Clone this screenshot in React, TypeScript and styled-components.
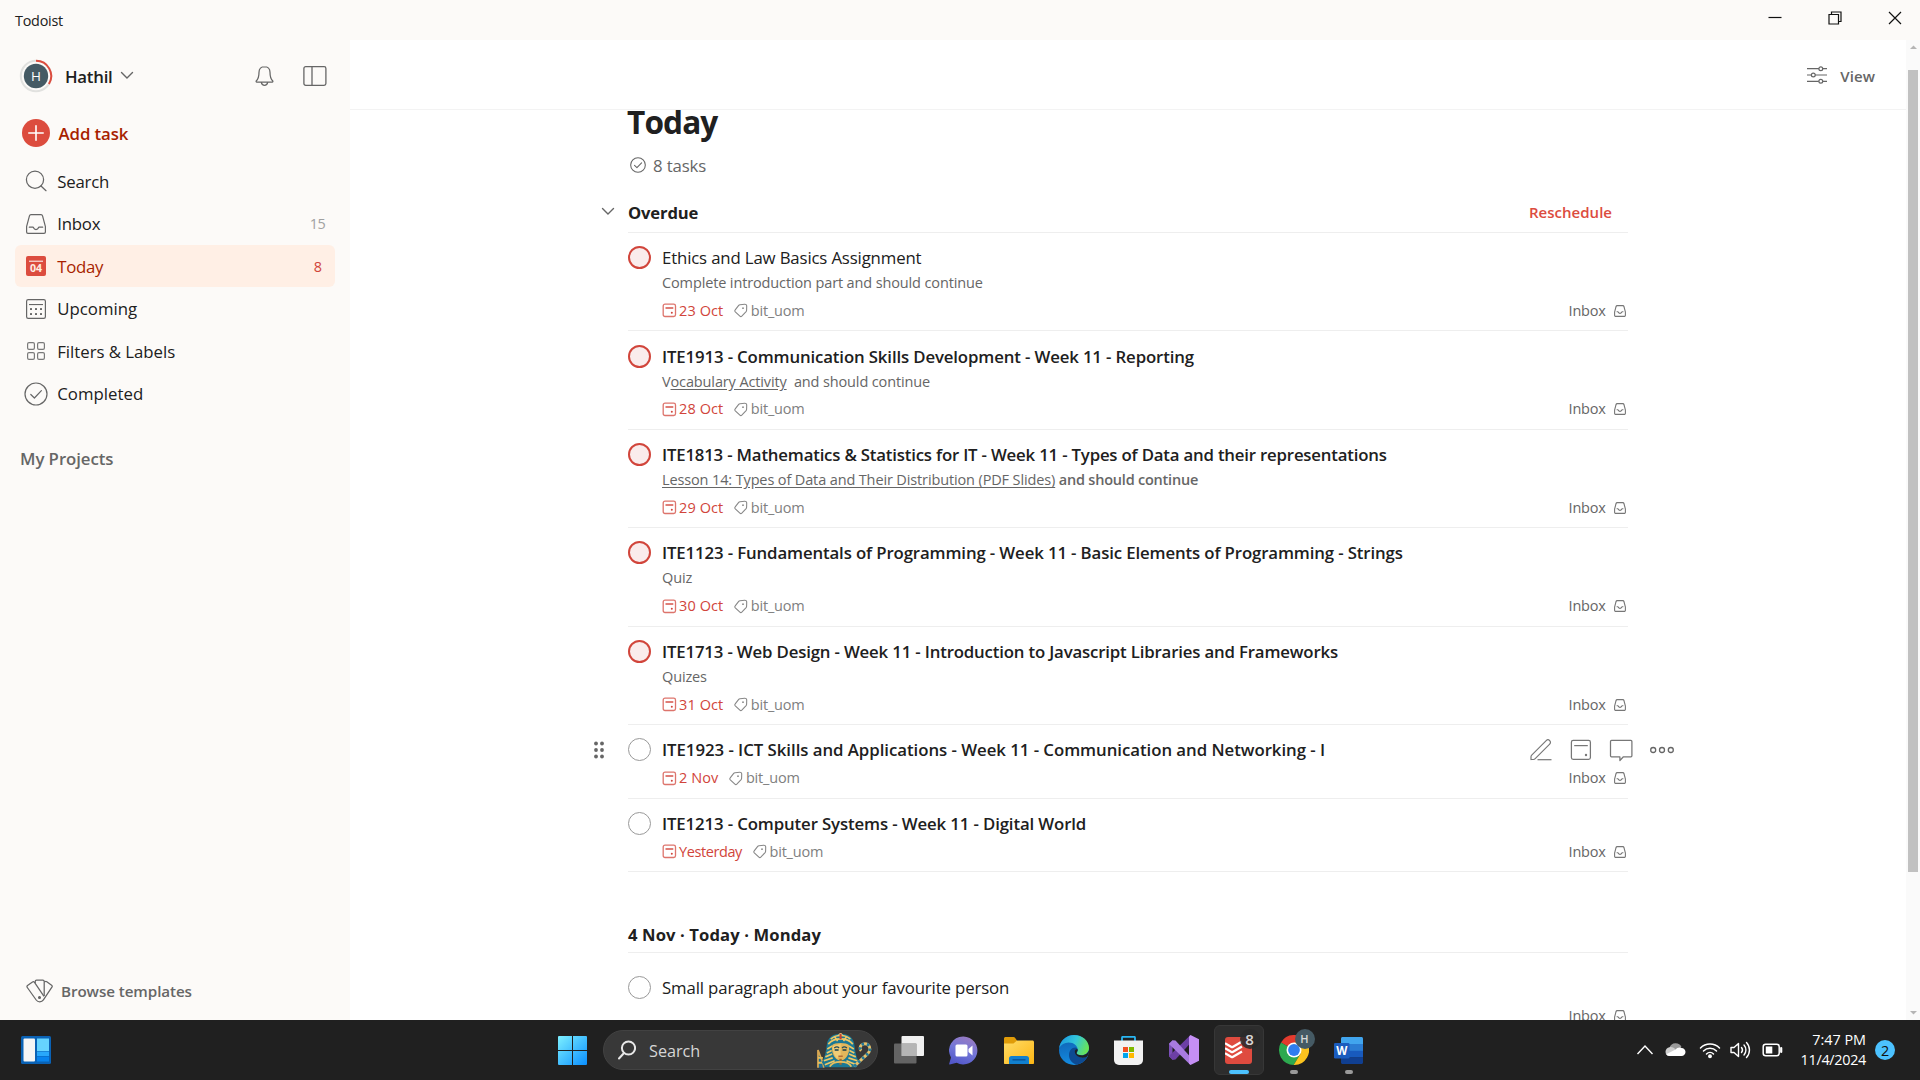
import React from 'react';
import styled, { createGlobalStyle } from 'styled-components';

const GlobalStyle = createGlobalStyle`
  * { box-sizing: border-box; }
  html, body { margin: 0; padding: 0; overflow: hidden; }
  body {
    font-family: "Open Sans", "Noto Sans", sans-serif;
    color: #202020;
    background: #fff;
  }
  svg { display: block; flex: none; }
`;

/* ---------- frame ---------- */

const Screen = styled.div`
  width: 1920px;
  height: 1080px;
  display: flex;
  flex-direction: column;
  overflow: hidden;
`;

const TitleBar = styled.header`
  height: 40px;
  flex: none;
  display: flex;
  justify-content: space-between;
  padding-left: 15px;
  background: #fcfaf8;
`;

const AppName = styled.span`
  font-size: 14.4px;
  line-height: 41px;
  letter-spacing: -0.24px;
`;

const WindowControls = styled.div`
  display: flex;
  margin-right: -5px;
`;

const WindowButton = styled.div`
  width: 60px;
  height: 36px;
  display: grid;
  place-items: center;
`;

const Body = styled.div`
  flex: 1;
  min-height: 0;
  display: flex;
`;

/* ---------- sidebar ---------- */

const Sidebar = styled.aside`
  width: 350px;
  flex: none;
  display: flex;
  flex-direction: column;
  padding: 13px 15px 0;
  background: #fcfaf8;
`;

const Profile = styled.div`
  height: 45px;
  display: flex;
  align-items: center;
  padding: 0 8px 0 4px;
`;

const UserName = styled.span`
  margin: 1px 7px 0 12px;
  font-size: 16.8px;
  font-weight: 600;
  letter-spacing: -0.25px;
`;

const ProfileActions = styled.div`
  display: flex;
  align-items: center;
  gap: 29.5px;
  margin-left: auto;
`;

const AddTask = styled.div`
  height: 44px;
  margin: 13px 0 5px;
  padding-left: 7px;
  display: flex;
  align-items: center;
  gap: 8.5px;
  font-size: 16.8px;
  font-weight: 600;
  letter-spacing: -0.08px;
  color: #a81f00;
`;

const NavRow = styled.div<{ $active?: boolean }>`
  height: 42px;
  flex: none;
  margin-bottom: 0.5px;
  display: flex;
  align-items: center;
  padding: 0 9px;
  border-radius: 6px;
  background: ${p => (p.$active ? '#ffefe5' : 'transparent')};
  color: ${p => (p.$active ? '#a81f00' : '#202020')};
`;

const NavIcon = styled.div`
  width: 24px;
  display: grid;
  place-items: center;
`;

const NavLabel = styled.span<{ $tracking: number }>`
  flex: 1;
  margin-left: 9.2px;
  font-size: 16.8px;
  letter-spacing: ${p => p.$tracking}px;
`;

const NavCount = styled.span<{ $active?: boolean }>`
  width: 17px;
  text-align: center;
  font-size: 14.4px;
  letter-spacing: -0.6px;
  color: ${p => (p.$active ? '#d1453b' : '#a0a0a0')};
`;

const ProjectsHeading = styled.div`
  margin: 32px 0 0 5px;
  font-size: 16.8px;
  line-height: 24px;
  font-weight: 600;
  letter-spacing: -0.06px;
  color: #666;
`;

const Templates = styled.div`
  height: 40px;
  margin: auto 0 9px;
  padding-left: 10.5px;
  display: flex;
  align-items: center;
  gap: 8.5px;
  font-size: 15.2px;
  font-weight: 600;
  letter-spacing: -0.08px;
  color: #666;
`;

/* ---------- main ---------- */

const Main = styled.main`
  flex: 1;
  min-width: 0;
  display: flex;
  flex-direction: column;
`;

const ViewHeader = styled.div`
  height: 70px;
  flex: none;
  display: flex;
  justify-content: flex-end;
  align-items: center;
  gap: 13px;
  padding-right: 31px;
  border-bottom: 1px solid #f3f3f3;
`;

const ViewLabel = styled.span`
  margin-top: 3px;
  font-size: 15px;
  font-weight: 600;
  letter-spacing: 0.1px;
  color: #666;
`;

const Content = styled.div`
  flex: 1;
  min-height: 0;
  overflow: hidden;
`;

const List = styled.div`
  width: 1000px;
  margin-left: 278px;
`;

const PageTitle = styled.h1`
  margin: -4px 0 0 -1px;
  font-size: 31.6px;
  line-height: 32px;
  font-weight: 700;
  letter-spacing: -0.9px;
`;

const TaskCount = styled.div`
  height: 24px;
  margin-top: 15px;
  padding-left: 2px;
  display: flex;
  align-items: center;
  gap: 7px;
  font-size: 16.8px;
  letter-spacing: -0.15px;
  color: #666;
`;

const SectionHeader = styled.div<{ $gap: number; $height: number }>`
  position: relative;
  height: ${p => p.$height}px;
  margin-top: ${p => p.$gap}px;
  display: flex;
  justify-content: space-between;
  border-bottom: 1px solid #eee;
`;

const SectionTitle = styled.h2<{ $tracking: number }>`
  margin: 1px 0 0;
  font-size: 16.6px;
  line-height: 24px;
  font-weight: 700;
  letter-spacing: ${p => p.$tracking}px;
`;

const Collapse = styled.div`
  position: absolute;
  left: -27px;
  top: 6.5px;
`;

const Reschedule = styled.span`
  margin-right: 16px;
  font-size: 15px;
  line-height: 24px;
  font-weight: 600;
  color: #dc4c3e;
  letter-spacing: 0.02px;
`;

const TaskRow = styled.article<{ $height: number }>`
  position: relative;
  height: ${p => p.$height}px;
  display: flex;
  padding-top: 12.2px;
  border-bottom: 1px solid #eee;
`;

const Checkbox = styled.div<{ $priority?: boolean }>`
  width: 23px;
  height: 23px;
  flex: none;
  margin: 1px 11px 0 0;
  border-radius: 50%;
  border: ${p => (p.$priority ? '2px solid #d1453b' : '1px solid #999')};
  background: ${p => (p.$priority ? '#faecec' : '#fff')};
`;

const TaskBody = styled.div`
  flex: 1;
  min-width: 0;
  white-space: pre;
`;

const TaskTitle = styled.div<{ $bold?: boolean; $tracking: number }>`
  font-size: 16.8px;
  line-height: 25px;
  font-weight: ${p => (p.$bold ? 600 : 400)};
  letter-spacing: ${p => p.$tracking}px;
`;

const Description = styled.div`
  margin-top: 3px;
  padding-bottom: 1.8px;
  font-size: 14.5px;
  line-height: 20px;
  letter-spacing: -0.13px;
  color: #666;
`;

const DocLink = styled.span`
  text-decoration: underline;
  text-underline-offset: 2px;
`;

const Strong = styled.strong`
  font-weight: 600;
  letter-spacing: -0.22px;
`;

const Meta = styled.div`
  height: 20px;
  margin-top: 6px;
  display: flex;
  align-items: center;
  font-size: 14.5px;
  line-height: 20px;
`;

const DueDate = styled.div<{ $tracking: number }>`
  display: flex;
  align-items: center;
  gap: 2px;
  margin-right: 11px;
  letter-spacing: ${p => p.$tracking}px;
  color: #d1453b;
`;

const Tag = styled.div`
  display: flex;
  align-items: center;
  gap: 2.5px;
  letter-spacing: -0.2px;
  color: #808080;
`;

const Project = styled.div`
  margin-left: auto;
  display: flex;
  align-items: center;
  gap: 8.5px;
  padding-right: 2px;
  letter-spacing: -0.25px;
  color: #666;
`;

const DragHandle = styled.div`
  position: absolute;
  left: -35px;
  top: 16px;
`;

const RowActions = styled.div`
  position: absolute;
  right: -47px;
  top: 13px;
  display: flex;
  gap: 16px;
`;

const ScrollTrack = styled.div`
  width: 14px;
  flex: none;
  display: flex;
  flex-direction: column;
  align-items: center;
  padding: 5px 0;
  background: #fafafa;
`;

const ScrollThumb = styled.div`
  width: 10px;
  height: 802px;
  margin: 21px 0 auto;
  background: #c1c1c1;
`;

/* ---------- taskbar ---------- */

const Taskbar = styled.footer`
  height: 60px;
  flex: none;
  display: flex;
  align-items: center;
  padding: 0 25px 0 21px;
  background: #202020;
  color: #fff;
`;

const StartArea = styled.div`
  display: flex;
  align-items: center;
  margin-left: 507px;
  gap: 16px;
`;

const SearchPill = styled.div`
  width: 275px;
  height: 40px;
  display: flex;
  align-items: center;
  padding: 0 5px 0 14px;
  border-radius: 20px;
  border: 1px solid #424242;
  background: #383838;
  font-size: 16.2px;
  color: #d6d6d6;
`;

const SearchPrompt = styled.span`
  flex: 1;
  margin: 1px 0 0 13px;
`;

const AppStrip = styled.div`
  display: flex;
  margin-left: 3px;
`;

const AppCell = styled.div`
  width: 55px;
  height: 60px;
  padding: 5px 2.5px;
`;

const AppTile = styled.div<{ $active?: boolean }>`
  position: relative;
  height: 50px;
  display: grid;
  place-items: center;
  border-radius: 6px;
  border: 1px solid ${p => (p.$active ? '#373737' : 'transparent')};
  background: ${p => (p.$active ? '#2d2d2d' : 'transparent')};
`;

const RunMark = styled.i<{ $active?: boolean }>`
  position: absolute;
  bottom: 0;
  left: 50%;
  width: ${p => (p.$active ? 20 : 8)}px;
  height: 4px;
  transform: translateX(-50%);
  border-radius: 2px;
  background: ${p => (p.$active ? '#4cc2ff' : '#9a9a9a')};
`;

const TileBadge = styled.b<{ $tone: string; $size: number; $weight: number }>`
  position: absolute;
  right: 3px;
  top: 3px;
  width: 20px;
  height: 20px;
  border-radius: 50%;
  background: ${p => p.$tone};
  font-size: ${p => p.$size}px;
  line-height: 20px;
  font-weight: ${p => p.$weight};
  text-align: center;
  color: #d8d8d8;
`;

const Tray = styled.div`
  margin-left: auto;
  display: flex;
  align-items: center;
`;

const TrayIcons = styled.div`
  display: flex;
  align-items: center;
  gap: 11px;
`;

const WifiIcon = styled.svg`
  margin: 0 -2px 0 2px;
`;

const Clock = styled.div`
  width: 83px;
  margin-right: 9px;
  text-align: right;
  font-size: 14.4px;
  line-height: 20px;
`;

const ClockDate = styled.div`
  letter-spacing: -0.3px;
`;

const Notice = styled.div`
  width: 20px;
  height: 20px;
  border-radius: 50%;
  background: #4cc2ff;
  color: #111;
  font-size: 14.4px;
  line-height: 21px;
  text-align: center;
`;

/* ---------- icons ---------- */

const ink = '#666';

const Chevron = () => (
  <svg width="14" height="9" viewBox="0 0 14 9" fill="none" stroke={ink} strokeWidth="1.4">
    <path d="M1.500 1.500 7 7l5.500-5.500" strokeLinecap="round" />
  </svg>
);

const InboxIcon = () => (
  <svg width="20" height="20" viewBox="0 0 20 20" fill="none" stroke={ink} strokeWidth="1.2">
    <path d="M5 .6h10a1.6 1.6 0 0 1 1.55 1.2L19.4 12.5V18a1.4 1.4 0 0 1-1.4 1.4H2A1.4 1.4 0 0 1 .6 18v-5.500L3.450 1.800A1.600 1.600 0 0 1 5 .6Z" />
    <path d="M3.300 13.200h3.500a.8.8 0 0 1 .75.6 2.600 2.600 0 0 0 4.900 0 .8.8 0 0 1 .75-.6h3.500" strokeLinecap="round" />
  </svg>
);

const MiniInbox = () => (
  <svg width="12" height="12" viewBox="0 0 12 12" fill="none" stroke="#777" strokeWidth="1.1">
    <path d="M3.200.6h5.600a1.200 1.200 0 0 1 1.150.9l1.450 5.500v3.200a1.200 1.200 0 0 1-1.200 1.200H1.800A1.200 1.200 0 0 1 .6 10.200V7l1.450-5.500A1.200 1.200 0 0 1 3.200.6Z" />
    <path d="M2.600 6.700h1.200c.4 0 .5.300.600.600a1.700 1.700 0 0 0 3.200 0c.1-.3.200-.6.600-.6h1.200" />
  </svg>
);

const DateIcon = () => (
  <svg width="15" height="15" viewBox="0 0 15 15" fill="none" stroke="#d1453b">
    <rect x="1.200" y="1.200" width="12.300" height="12.300" rx="1.800" strokeOpacity=".75" strokeWidth="1.300" />
    <path d="M3.500 5h7.800" strokeWidth="1.400" />
    <circle cx="9.800" cy="9.800" r="1" fill="#d1453b" stroke="none" />
  </svg>
);

const TagIcon = () => (
  <svg width="14" height="15" viewBox="0 0 14 15" fill="none" stroke="#888" strokeWidth="1.100">
    <path d="M6 1.700 10.700 1.200c1.100-.1 2 .6 2 1.700l-.1 4.400c0 .5-.2.9-.5 1.300l-4.300 4.600c-.6.600-1.300.600-1.900 0L1.300 8.800c-.6-.6-.6-1.300-.1-1.900l3.500-4.500c.3-.4.700-.6 1.300-.7Z" />
    <circle cx="9" cy="5.200" r=".9" fill="#888" stroke="none" />
  </svg>
);

const CheckCircle = ({ size, width }: { size: number; width: number }) => (
  <svg width={size} height={size} viewBox="0 0 24 24" fill="none" stroke={ink} strokeWidth={width}>
    <circle cx="12" cy="12" r="11" />
    <path d="m6.800 12.500 3.600 3.500 7-7.300" strokeLinecap="round" strokeLinejoin="round" />
  </svg>
);

const Avatar = () => (
  <svg width="34" height="34" viewBox="0 0 34 34">
    <circle cx="17" cy="17" r="15.200" fill="none" stroke="#e1e1df" strokeWidth="2" />
    <path d="M17 1.800a15.200 15.200 0 0 1 12.900 23.200" fill="none" stroke="#dc4c3e" strokeWidth="2" />
    <circle cx="17" cy="17" r="12.200" fill="#455a64" />
    <text x="17" y="22" textAnchor="middle" fontSize="13.500" fill="#fff">H</text>
  </svg>
);

const Bell = () => (
  <svg width="19" height="22" viewBox="0 0 19 22" fill="none" stroke={ink} strokeWidth="1.250">
    <path d="M9.500 1.600c-3.300 0-5.500 2.400-5.500 5.600 0 4.800-.9 6.800-2.600 8.500-.6.600-.3 1.300.4 1.300h15.400c.7 0 1-.7.4-1.300C15.900 14 15 12 15 7.200c0-3.200-2.200-5.600-5.500-5.600Z" />
    <path d="M6.300 17.200c.3 2 1.500 3.200 3.200 3.200s2.900-1.200 3.200-3.200" />
  </svg>
);

const PanelIcon = () => (
  <svg width="24" height="20" viewBox="0 0 24 20" fill="none" stroke={ink} strokeWidth="1.300">
    <rect x=".9" y=".7" width="22" height="18.600" rx="1.800" />
    <path d="M9 .7v18.600" />
  </svg>
);

const PlusDisc = () => (
  <svg width="28" height="28" viewBox="0 0 28 28">
    <circle cx="14" cy="14" r="14" fill="#dc4c3e" />
    <path d="M14 6.800v14.400M6.800 14h14.400" stroke="#fff" strokeWidth="1.600" strokeLinecap="round" />
  </svg>
);

const SearchIcon = () => (
  <svg width="22" height="22" viewBox="0 0 22 22" fill="none" stroke={ink} strokeWidth="1.250">
    <circle cx="10" cy="9.700" r="8.600" />
    <path d="m16 16 5 4.700" strokeLinecap="round" />
  </svg>
);

const TodayIcon = () => (
  <svg width="20" height="20" viewBox="0 0 20 20">
    <rect width="20" height="20" rx="2" fill="#dc4c3e" />
    <path d="M3 5.200h14" stroke="#fff" strokeWidth="1" />
    <text x="10" y="16" textAnchor="middle" fontSize="10.500" fontWeight="700" fill="#ffefe5">04</text>
  </svg>
);

const UpcomingIcon = () => (
  <svg width="20" height="20" viewBox="0 0 20 20" fill={ink}>
    <rect x=".6" y=".6" width="18.800" height="18.800" rx="1.600" fill="none" stroke={ink} strokeWidth="1.200" />
    <path d="M3 5h14v1.100H3z" />
    {[10, 15].map(y => [5, 10, 15].map(x => <rect key={`${x}-${y}`} x={x - 1} y={y - 1} width="2" height="2" rx=".5" />))}
  </svg>
);

const FiltersIcon = () => (
  <svg width="20" height="20" viewBox="0 0 20 20" fill="none" stroke="#7a7a7a" strokeWidth="1.200">
    {[1.600, 11.600].map(y => [1.600, 11.600].map(x => <rect key={`${x}-${y}`} x={x} y={y} width="6.800" height="6.800" rx="1.400" />))}
  </svg>
);

const TemplatesIcon = () => (
  <svg width="27" height="24" viewBox="0 0 27 24" fill="none" stroke={ink} strokeWidth="1.250" strokeLinejoin="round">
    <path d="M10.200 21 1.300 8.500c-.5-.7-.3-1.500.2-2l5-3.500c.7-.5 1.500-.3 2 .3l9.500 14" />
    <path d="M9.200 4V2.500C9.200 1.700 9.700 1 10.600 1h6.200c.9 0 1.400.7 1.400 1.500v14.500" />
    <path d="m18.300 2.900 1.300-.4c.4-.1.800 0 1.200.2l4.800 3.500c.7.500.8 1.200.3 2l-8.500 12.700c-1.700 2.500-5.500 2.500-7.200.1" />
    <circle cx="13.500" cy="18.500" r=".9" fill={ink} />
  </svg>
);

const SlidersIcon = () => (
  <svg width="20" height="18" viewBox="0 0 20 18" fill="#fff" stroke={ink} strokeWidth="1.200">
    <path d="M0 2.700h20M0 9h20M0 15.300h20" />
    <circle cx="13.800" cy="2.700" r="1.900" />
    <circle cx="6.300" cy="9" r="1.900" />
    <circle cx="13.800" cy="15.300" r="1.900" />
  </svg>
);

const Grip = () => (
  <svg width="12" height="18" viewBox="0 0 12 18" fill={ink}>
    {[2.500, 9, 15.500].map(y => [3, 9].map(x => <circle key={`${x}-${y}`} cx={x} cy={y} r="1.900" />))}
  </svg>
);

const PencilAction = () => (
  <svg width="24" height="24" viewBox="0 0 24 24" fill="none" stroke="#777" strokeWidth="1.200">
    <path d="M2 21.600v-2.800c0-.7.200-1.200.7-1.700L17.200 2.600c1-1 2.500-1 3.500 0s1 2.500 0 3.500L6.200 20.700c-.5.500-1 .8-1.700.8H2Z" strokeLinejoin="round" />
    <path d="M8.500 21.700h14" />
  </svg>
);

const DateAction = () => (
  <svg width="24" height="24" viewBox="0 0 24 24" fill="none" stroke="#777" strokeWidth="1.250">
    <rect x="2.400" y="2.400" width="19" height="19" rx="1.800" />
    <path d="M5.200 7.600h13.600" />
    <circle cx="17" cy="17" r="1.200" fill="#777" stroke="none" />
  </svg>
);

const CommentAction = () => (
  <svg width="24" height="24" viewBox="0 0 24 24" fill="none" stroke="#777" strokeWidth="1.250" strokeLinejoin="round">
    <path d="M2.500 2.400h19.400c.6 0 1 .4 1 1v14.400c0 .6-.4 1-1 1h-7.500l-3.500 3.700v-3.700H2.500c-.6 0-1-.4-1-1V3.400c0-.6.4-1 1-1Z" />
  </svg>
);

const MoreAction = () => (
  <svg width="26" height="24" viewBox="0 0 26 24" fill="none" stroke={ink} strokeWidth="1.300">
    {[4.200, 13, 21.800].map(x => <circle key={x} cx={x} cy="12" r="2.500" />)}
  </svg>
);

/* ---------- taskbar drawings ---------- */

const WidgetsIcon = () => (
  <svg width="30" height="28" viewBox="0 0 30 28">
    <rect width="30" height="28" rx="1.500" fill="#0a62b5" />
    <rect x="2.500" y="2.500" width="11.500" height="23" rx="1" fill="#f5f5f5" />
    <rect x="16" y="2.500" width="12" height="12.500" fill="#66d4ff" />
    <rect x="16" y="15.500" width="12" height="4.500" fill="#28a8fb" />
    <rect x="16" y="20.500" width="12" height="5" fill="#0783ee" />
  </svg>
);

const WindowsIcon = () => (
  <svg width="29" height="29" viewBox="0 0 29 29">
    <defs>
      <linearGradient id="win" x1="0" y1="0" x2="1" y2="1"><stop stopColor="#7df0ff" /><stop offset="1" stopColor="#0a8fff" /></linearGradient>
    </defs>
    <path fill="url(#win)" d="M1 0h13v14H0V1a1 1 0 0 1 1-1Zm14 0h13a1 1 0 0 1 1 1v13H15ZM0 15h14v14H1a1 1 0 0 1-1-1Zm15 0h14v13a1 1 0 0 1-1 1H15Z" />
  </svg>
);

const PillSearchIcon = () => (
  <svg width="18" height="20" viewBox="0 0 18 20" fill="none" stroke="#e8e8e8" strokeWidth="2">
    <circle cx="10.500" cy="8" r="6.600" />
    <path d="m6 13-5 5.500" strokeLinecap="round" />
  </svg>
);

const PharaohIcon = () => (
  <svg width="55" height="36" viewBox="0 0 56 36">
    <path d="M1 36V18l5 13 1 5" fill="#1d6f97" stroke="#d9a852" strokeWidth="1.800" />
    <path d="M1 26h5M1 31h6" stroke="#e8c060" strokeWidth="2" />
    <path d="M24 1.500c8 0 13 4 14 11 1 8 2 13 5 18l-3 5H8l-3-5c3-5 4-10 5-18 1-7 6-11 14-11Z" fill="#1b7895" />
    <g stroke="#efc765" strokeWidth="1.700" fill="none">
      <path d="M14 7c5-5 15-5 20 0M11.500 12c6-7 19-7 25 0M10.500 17l5-3M10 21l5-2.500M8.500 25l7-3M7 29l9-3M37.500 17l-5-3M38 21l-5-2.500M39.500 25l-7-3M41 29l-9-3M8 33l10-4M40 33l-10-4" />
      <path d="M18 4.500 21 9M30 4.500 27 9" />
    </g>
    <path d="M15.500 13c2-3 15-3 17 0 .8 5-.2 10-3.500 13.500-3 3-7 3-10 0-3.300-3.500-4.300-8.500-3.500-13.500Z" fill="#e3b65b" />
    <path d="M24 12v12c-2 0-3 1-3 3-3-2-5-7-4.700-13Z" fill="#f1cd78" />
    <path d="M17.500 16c2-1.500 4-1.200 5 0M25.500 16c1-1.200 3-1.500 5 0" stroke="#234b5a" strokeWidth="1.300" fill="none" />
    <path d="M18 18h4M26 18h4" stroke="#173b48" strokeWidth="1.600" />
    <path d="M21.800 24.300h4.400" stroke="#a8552c" strokeWidth="1.200" />
    <path d="M22.800 27h2.400v6h-2.400z" fill="#a36a2f" />
    <path d="M24 1v6" stroke="#c8402f" strokeWidth="2.200" />
    <path d="M22 3.500c0-3 4-3 4 0" stroke="#f4d27a" strokeWidth="1" fill="none" />
    <path d="M13 35c2-4 6-5 11-5s9 1 11 5" fill="none" stroke="#e8bf60" strokeWidth="1.800" />
    <path d="M38 34.500 51.500 22c3-3 3-7 .5-9.200-3-2.300-7.500-.8-8 2.500-.2 1.500 0 2.500 1 3.500" fill="none" stroke="#e6c06a" strokeWidth="3" />
    <path d="M38 34.500 51.500 22c3-3 3-7 .5-9.200-3-2.300-7.500-.8-8 2.500-.2 1.500 0 2.500 1 3.500" fill="none" stroke="#22799b" strokeWidth="3" strokeDasharray="2.500 3" />
  </svg>
);

const TaskViewIcon = () => (
  <svg width="30" height="28" viewBox="0 0 30 28">
    <rect x="7.500" width="22.500" height="20" rx="1" fill="#f0f0f0" />
    <rect y="7.500" width="22.500" height="20" rx="1" fill="#747474" fillOpacity=".82" />
    <path d="M7.500 7.500h15v12.500h-15z" fill="#b5b5b5" />
  </svg>
);

const ChatIcon = () => (
  <svg width="29" height="29" viewBox="0 0 29 29">
    <defs><linearGradient id="chat" x1=".7" y1="0" x2=".3" y2="1"><stop stopColor="#9a7bc2" /><stop offset=".5" stopColor="#7276d8" /><stop offset="1" stopColor="#5257c9" /></linearGradient></defs>
    <path d="M14.500.5a14 14 0 1 1-6.800 26.300L.8 28.500c-.6.100-.8-.3-.6-.8L2 21.500A14 14 0 0 1 14.500.5Z" fill="url(#chat)" />
    <rect x="6.500" y="8.500" width="12" height="12" rx="1.500" fill="#fff" />
    <path d="m19.500 13 4-3.500v10l-4-3.500Z" fill="#fff" />
  </svg>
);

const FolderIcon = () => (
  <svg width="30" height="27" viewBox="0 0 30 27">
    <defs><linearGradient id="folder" x1="0" y1="0" x2="1" y2="1"><stop stopColor="#ffdc66" /><stop offset="1" stopColor="#fcb614" /></linearGradient></defs>
    <path d="M0 1.500C0 .7.700 0 1.500 0h8c.6 0 1 .2 1.300.6L13 3.500V8H0Z" fill="#e09c08" />
    <path d="M0 6.500h9.500L13 3.500h15.500c.8 0 1.500.7 1.500 1.500v21c0 .6-.4 1-1 1H1c-.6 0-1-.4-1-1Z" fill="url(#folder)" />
    <path d="M5 27v-5.500a2.500 2.500 0 0 1 2.500-2.500h15a2.500 2.500 0 0 1 2.500 2.500V27Z" fill="#1180cf" />
    <path d="M8.500 22.800h13" stroke="#0a559c" strokeWidth="1.500" />
  </svg>
);

const EdgeIcon = () => (
  <svg width="30" height="30" viewBox="0 0 30 30">
    <defs>
      <linearGradient id="edgeTop" x1="0" y1=".3" x2="1" y2=".6"><stop stopColor="#1a9ae0" /><stop offset=".5" stopColor="#33c6d9" /><stop offset="1" stopColor="#6be550" /></linearGradient>
      <linearGradient id="edgeLow" x1=".3" y1="0" x2=".5" y2="1"><stop stopColor="#0f5fb0" /><stop offset="1" stopColor="#148de2" /></linearGradient>
    </defs>
    <circle cx="15" cy="15" r="15" fill="url(#edgeLow)" />
    <path d="M.2 13C1.200 5.500 7.500 0 15 0c8.500 0 15 6 15 12.800 0 4.400-3.300 7.400-7.300 7.400-3.500 0-5.200-1.200-5.200-2.300 0-.8 1.200-1.400 1.200-3.500 0-3.500-3.700-7-9.200-7C5.500 7.400 2 9.500.2 13Z" fill="url(#edgeTop)" />
    <path d="M18 17.500c-1.500 1.500 0 5 5 5 2 0 3.600-.6 4.500-1 .6-.2.900.2.600.7a15 15 0 0 1-10.600 7.500C13 28.500 10 24.500 10 20c0-4 2.500-7.500 6.500-7.500 1.700.5 2.400 2 2.200 3Z" fill="#0d4a92" />
    <path d="M18.700 14.500c0 1.800-1.200 2.600-1.200 3.400 0 1.100 1.700 2.300 5.200 2.300 4 0 6.300-2.500 7.100-5 .6 3-.8 5.800-2 6.500-5 2.500-12-.2-12-5.200 0-1.500 1.400-2.900 2.900-2Z" fill="#202020" />
  </svg>
);

const StoreIcon = () => (
  <svg width="29" height="29" viewBox="0 0 29 29">
    <path d="M8 6V1.800c0-.6.400-1 1-1h11c.6 0 1 .4 1 1V6" fill="none" stroke="#29b6f2" strokeWidth="1.800" />
    <path d="M0 4.500h29V24a5 5 0 0 1-5 5H5a5 5 0 0 1-5-5Z" fill="#f2f2f2" />
    <path d="M9 11h5v5H9z" fill="#f25022" /><path d="M15 11h5v5h-5z" fill="#7fba00" />
    <path d="M9 17h5v5H9z" fill="#00a4ef" /><path d="M15 17h5v5h-5z" fill="#ffb900" />
  </svg>
);

const VisualStudioIcon = () => (
  <svg width="30" height="30" viewBox="0 0 30 30">
    <path d="M0 8.500 3.500 5.500 8 9.500v11l-4.500 4-3.500-3Z" fill="#7c50b8" />
    <path d="M3.500 9.500v11L8 16.500v-3Z" fill="#202020" />
    <path d="m3.500 25-3.500-4L21.500 0v8L6.500 24.500Z" fill="#6c3fa5" />
    <path d="m3.500 5.200 3 .3L21.500 22v8L0 9Z" fill="#a87be0" />
    <path d="M21.500 0 30 4.200v21.600L21.500 30 20 28.500V1.500Z" fill="#c58ff5" />
  </svg>
);

const TodoistIcon = () => (
  <svg width="27" height="27" viewBox="0 0 27 27">
    <rect width="27" height="27" rx="3" fill="#df4b3f" />
    <g fill="none" stroke="#fff" strokeWidth="2.300">
      <path d="m0 6.300 6.500 3.600c.4.200.8.200 1.200 0L17 4.500" />
      <path d="m0 11.300 6.500 3.600c.4.200.8.200 1.200 0L17 9.500" />
      <path d="m0 16.300 6.500 3.600c.4.200.8.200 1.200 0L17 14.500" />
    </g>
  </svg>
);

const ChromeIcon = () => (
  <svg width="30" height="30" viewBox="0 0 30 30">
    <path d="M15 15 2 7.500a15 15 0 0 1 26 0Z" fill="#e33b2e" />
    <path d="M15 15 2 7.500A15 15 0 0 0 14.700 30L21.500 18.700Z" fill="#2da94f" />
    <path d="M15 7.500h13A15 15 0 0 1 14.700 30l6.800-11.300Z" fill="#fcc31e" />
    <circle cx="15" cy="15" r="7.500" fill="#fff" />
    <circle cx="15" cy="15" r="5.900" fill="#2f7df0" />
  </svg>
);

const WordIcon = () => (
  <svg width="29" height="27" viewBox="0 0 29 27">
    <path d="M7 1.500C7 .7 7.700 0 8.500 0h19c.8 0 1.500.7 1.500 1.500V7H7Z" fill="#41a5ee" />
    <path d="M7 7h22v7H7z" fill="#2b7cd3" />
    <path d="M7 13.800h22v6.700H7z" fill="#185abd" />
    <path d="M7 20.200h22v5.300c0 .8-.7 1.500-1.500 1.500h-19c-.8 0-1.500-.7-1.500-1.500Z" fill="#103f91" />
    <rect y="6" width="15.500" height="15.500" rx="1.300" fill="#1b5cbe" />
    <text x="7.700" y="18" textAnchor="middle" fontSize="11.500" fontWeight="700" fill="#fff">W</text>
  </svg>
);

/* ---------- data ---------- */

const nav = [
  { label: 'Search', icon: <SearchIcon />, tracking: -0.19 },
  { label: 'Inbox', icon: <InboxIcon />, count: 15, tracking: -0.22 },
  { label: 'Today', icon: <TodayIcon />, count: 8, active: true, tracking: -0.27 },
  { label: 'Upcoming', icon: <UpcomingIcon />, tracking: 0.02 },
  { label: 'Filters & Labels', icon: <FiltersIcon />, tracking: -0.02 },
  { label: 'Completed', icon: <CheckCircle size={24} width={1.2} />, tracking: 0.02 },
];

type Task = {
  title: string;
  tracking: number;
  bold?: boolean;
  priority?: boolean;
  note?: React.ReactNode;
  due?: string;
  dueTracking?: number;
  hovered?: boolean;
};

const overdue: Task[] = [
  {
    title: 'Ethics and Law Basics Assignment', tracking: -0.15, priority: true, due: '23 Oct', dueTracking: 0.1,
    note: 'Complete introduction part and should continue',
  },
  {
    title: 'ITE1913 - Communication Skills Development - Week 11 - Reporting', tracking: -0.135, bold: true, priority: true, due: '28 Oct', dueTracking: 0.1,
    note: <>V<DocLink>ocabulary Activity</DocLink>{'  and should continue'}</>,
  },
  {
    title: 'ITE1813 - Mathematics & Statistics for IT - Week 11 - Types of Data and their representations', tracking: -0.188, bold: true, priority: true, due: '29 Oct', dueTracking: 0.1,
    note: <><DocLink>Lesson 14: Types of Data and Their Distribution (PDF Slides)</DocLink> <Strong>and should continue</Strong></>,
  },
  {
    title: 'ITE1123 - Fundamentals of Programming - Week 11 - Basic Elements of Programming - Strings', tracking: -0.125, bold: true, priority: true, due: '30 Oct', dueTracking: 0.1,
    note: 'Quiz',
  },
  {
    title: 'ITE1713 - Web Design - Week 11 - Introduction to Javascript Libraries and Frameworks', tracking: -0.165, bold: true, priority: true, due: '31 Oct', dueTracking: 0.1,
    note: 'Quizes',
  },
  { title: 'ITE1923 - ICT Skills and Applications - Week 11 - Communication and Networking - I', tracking: -0.035, bold: true, due: '2 Nov', dueTracking: 0.1, hovered: true },
  { title: 'ITE1213 - Computer Systems - Week 11 - Digital World', tracking: -0.125, bold: true, due: 'Yesterday', dueTracking: -0.4 },
];

const today: Task[] = [
  { title: 'Small paragraph about your favourite person', tracking: -0.13 },
];

const TaskItem = ({ task }: { task: Task }) => (
  <TaskRow $height={task.note ? 98.4 : 73.7}>
    {task.hovered && <DragHandle><Grip /></DragHandle>}
    <Checkbox $priority={task.priority} />
    <TaskBody>
      <TaskTitle $bold={task.bold} $tracking={task.tracking}>{task.title}</TaskTitle>
      {task.note && <Description>{task.note}</Description>}
      <Meta>
        {task.due && (
          <>
            <DueDate $tracking={task.dueTracking ?? 0}><DateIcon />{task.due}</DueDate>
            <Tag><TagIcon />bit_uom</Tag>
          </>
        )}
        <Project>Inbox<MiniInbox /></Project>
      </Meta>
    </TaskBody>
    {task.hovered && (
      <RowActions><PencilAction /><DateAction /><CommentAction /><MoreAction /></RowActions>
    )}
  </TaskRow>
);

const TodayList = styled.div`
  padding-top: 10px;
`;

const pinned = [
  { name: 'task-view', icon: <TaskViewIcon /> },
  { name: 'chat', icon: <ChatIcon /> },
  { name: 'files', icon: <FolderIcon /> },
  { name: 'edge', icon: <EdgeIcon /> },
  { name: 'store', icon: <StoreIcon /> },
  { name: 'visual-studio', icon: <VisualStudioIcon /> },
  { name: 'todoist', icon: <TodoistIcon />, active: true, running: true, badge: <TileBadge $tone="#2a2a2add" $size={15} $weight={600}>8</TileBadge> },
  { name: 'chrome', icon: <ChromeIcon />, running: true, badge: <TileBadge $tone="#455a64" $size={11} $weight={600}>H</TileBadge> },
  { name: 'word', icon: <WordIcon />, running: true },
];

export default function App() {
  return (
    <Screen>
      <GlobalStyle />
      <TitleBar>
        <AppName>Todoist</AppName>
        <WindowControls>
          <WindowButton><svg width="14" height="14" viewBox="0 0 14 14"><path d="M.5 6.500h13" stroke="#111" strokeWidth="1.200" /></svg></WindowButton>
          <WindowButton>
            <svg width="14" height="14" viewBox="0 0 14 14" fill="none" stroke="#111" strokeWidth="1.200">
              <path d="M1 3.500h9.500V13H1zM3.500 3.500V1H13v9.500h-2.500" />
            </svg>
          </WindowButton>
          <WindowButton><svg width="14" height="14" viewBox="0 0 14 14"><path d="m1 1 12 12M13 1 1 13" stroke="#111" strokeWidth="1.200" /></svg></WindowButton>
        </WindowControls>
      </TitleBar>

      <Body>
        <Sidebar>
          <Profile>
            <Avatar />
            <UserName>Hathil</UserName>
            <Chevron />
            <ProfileActions><Bell /><PanelIcon /></ProfileActions>
          </Profile>
          <AddTask><PlusDisc />Add task</AddTask>
          <nav>
            {nav.map(n => (
              <NavRow key={n.label} $active={n.active}>
                <NavIcon>{n.icon}</NavIcon>
                <NavLabel $tracking={n.tracking}>{n.label}</NavLabel>
                {n.count && <NavCount $active={n.active}>{n.count}</NavCount>}
              </NavRow>
            ))}
          </nav>
          <ProjectsHeading>My Projects</ProjectsHeading>
          <Templates><TemplatesIcon />Browse templates</Templates>
        </Sidebar>

        <Main>
          <ViewHeader><SlidersIcon /><ViewLabel>View</ViewLabel></ViewHeader>
          <Content>
            <List>
              <PageTitle>Today</PageTitle>
              <TaskCount><CheckCircle size={16} width={1.6} />8 tasks</TaskCount>
              <SectionHeader $gap={23} $height={33}>
                <Collapse><Chevron /></Collapse>
                <SectionTitle $tracking={-0.15}>Overdue</SectionTitle>
                <Reschedule>Reschedule</Reschedule>
              </SectionHeader>
              {overdue.map(t => <TaskItem key={t.title} task={t} />)}
              <SectionHeader $gap={49.6} $height={31}>
                <SectionTitle $tracking={0.12}>4 Nov · Today · Monday</SectionTitle>
              </SectionHeader>
              <TodayList>
                {today.map(t => <TaskItem key={t.title} task={t} />)}
              </TodayList>
            </List>
          </Content>
        </Main>

        <ScrollTrack>
          <svg width="7" height="4" viewBox="0 0 7 4"><path d="M0 4 3.500.5 7 4Z" fill="#b5b5b5" /></svg>
          <ScrollThumb />
          <svg width="7" height="4" viewBox="0 0 7 4"><path d="m0 0 3.500 3.500L7 0Z" fill="#b5b5b5" /></svg>
        </ScrollTrack>
      </Body>

      <Taskbar>
        <WidgetsIcon />
        <StartArea>
          <WindowsIcon />
          <SearchPill><PillSearchIcon /><SearchPrompt>Search</SearchPrompt><PharaohIcon /></SearchPill>
        </StartArea>
        <AppStrip>
          {pinned.map(p => (
            <AppCell key={p.name}>
              <AppTile $active={p.active}>
                {p.icon}
                {p.badge}
                {p.running && <RunMark $active={p.active} />}
              </AppTile>
            </AppCell>
          ))}
        </AppStrip>
        <Tray>
          <TrayIcons>
            <svg width="18" height="18" viewBox="0 0 18 18" fill="none" stroke="#fff" strokeWidth="1.400"><path d="m1.500 13 7.500-8 7.500 8" /></svg>
            <svg width="21" height="18" viewBox="0 0 21 18">
              <path d="M4.500 6.500A6.500 6.500 0 0 1 16.500 6l-6 6Z" fill="#9a9a9a" />
              <path d="M4.500 6.200c2-.5 3.800 0 6 2L4.500 15C2 15 .5 13 .5 10.700c0-2.200 1.700-4.200 4-4.500Z" fill="#cfcfcf" />
              <path d="M10.500 8.500c1.600-2 4-2.600 6-1.500 2.300 0 4 1.800 4 4s-1.700 4-4 4H4.500c-1.500 0-2.500-.6-3.200-1.700Z" fill="#fff" />
            </svg>
            <WifiIcon width="22" height="18" viewBox="0 0 22 18" fill="none" stroke="#fff" strokeWidth="1.500" strokeLinecap="round">
              <path d="M1.500 7a13.500 13.500 0 0 1 19 0M4.500 10a9.200 9.200 0 0 1 13 0M7.500 13a5 5 0 0 1 7 0" />
              <circle cx="11" cy="15.200" r="1.200" fill="#fff" />
            </WifiIcon>
            <svg width="21" height="18" viewBox="0 0 21 18" fill="none" stroke="#fff" strokeWidth="1.400" strokeLinecap="round" strokeLinejoin="round">
              <path d="M1 6.500h3L8.500 2.500v13L4 11.500H1ZM11.500 6.500a4 4 0 0 1 0 5M14 4a7.500 7.500 0 0 1 0 10M16.500 1.500a11 11 0 0 1 0 15" />
            </svg>
            <svg width="21" height="18" viewBox="0 0 21 18" fill="none" stroke="#fff" strokeWidth="1.500">
              <rect x="1.200" y="3.200" width="16" height="11.600" rx="2.500" />
              <rect x="3.800" y="5.500" width="6.500" height="7" fill="#fff" stroke="none" />
              <path d="M19.200 7v4" strokeWidth="2.200" strokeLinecap="round" />
            </svg>
          </TrayIcons>
          <Clock>
            <div>7:47 PM</div>
            <ClockDate>11/4/2024</ClockDate>
          </Clock>
          <Notice>2</Notice>
        </Tray>
      </Taskbar>
    </Screen>
  );
}
